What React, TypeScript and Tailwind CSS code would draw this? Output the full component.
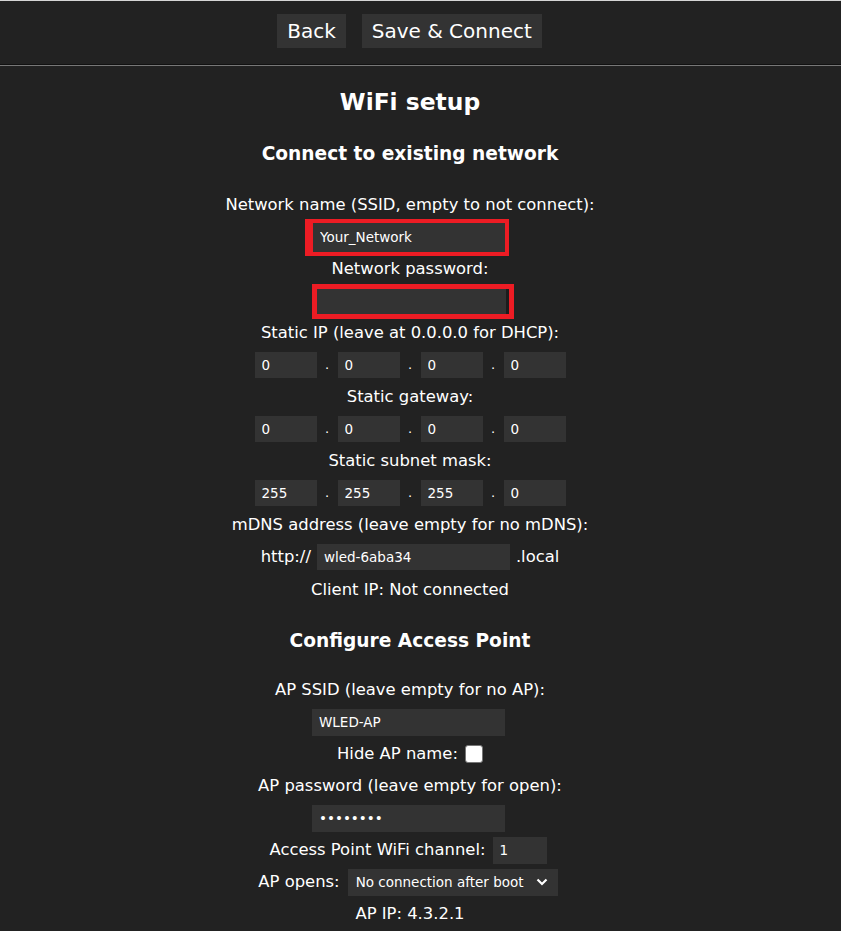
import React from 'react';

const inputCls =
  'bg-[#333] text-white text-[13.5px] px-[7px] outline-none border-0 font-["DejaVu_Sans",sans-serif]';

const Row: React.FC<{ children: React.ReactNode }> = ({ children }) => (
  <div className="h-8 flex items-center justify-center whitespace-nowrap">{children}</div>
);

const IpRow: React.FC<{ values: string[] }> = ({ values }) => (
  <Row>
    {values.map((v, i) => (
      <React.Fragment key={i}>
        {i > 0 && <span className="w-[21px] text-center text-[13px]">.</span>}
        <input readOnly value={v} className={`${inputCls} w-[62px] h-[26px]`} />
      </React.Fragment>
    ))}
  </Row>
);

export default function App() {
  return (
    <div className="min-h-[931px] bg-[#222] text-white font-['DejaVu_Sans',sans-serif] text-[16.4px] overflow-hidden">
      <div className="h-px bg-[#d6d6d6]" />
      <div className="h-[63px] pt-[13px] flex justify-center gap-4 pr-[22px]">
        <button className="h-[34px] px-[10px] bg-[#333] text-[20px] text-white">Back</button>
        <button className="h-[34px] px-[10px] bg-[#333] text-[20px] text-white">Save &amp; Connect</button>
      </div>
      <div className="h-px bg-[#111]" />
      <div className="h-px bg-[#777]" />

      <div className="pr-[21px] text-center">
        <h2 className="mt-[18px] h-9 leading-9 text-[23.4px] font-bold">WiFi setup</h2>
        <h3 className="mt-[18px] h-8 leading-8 text-[18.6px] font-bold">Connect to existing network</h3>

        <div className="mt-[19px]">
          <Row>Network name (SSID, empty to not connect):</Row>
          <Row>
            <div className="mr-[6px] w-[204px] h-[37px] border-[#ed1c24] border-y-4 border-l-8 border-r-4 flex">
              <input readOnly value="Your_Network" className={`${inputCls} w-full h-full`} />
            </div>
          </Row>
          <Row>Network password:</Row>
          <Row>
            <div className="ml-[6px] w-[202px] h-[35px] border-[5px] border-[#ed1c24] bg-[#1c1c1c] pr-[3px] flex">
              <input readOnly type="password" value="" className={`${inputCls} w-full h-full`} />
            </div>
          </Row>
          <Row>Static IP (leave at 0.0.0.0 for DHCP):</Row>
          <IpRow values={['0', '0', '0', '0']} />
          <Row>Static gateway:</Row>
          <IpRow values={['0', '0', '0', '0']} />
          <Row>Static subnet mask:</Row>
          <IpRow values={['255', '255', '255', '0']} />
          <Row>mDNS address (leave empty for no mDNS):</Row>
          <Row>
            <span className="mr-[6px]">http://</span>
            <input readOnly value="wled-6aba34" className={`${inputCls} w-[193px] h-[26px]`} />
            <span className="ml-[6px]">.local</span>
          </Row>
          <div className="pt-[1px]">
            <Row>Client IP: Not connected</Row>
          </div>
        </div>

        <h3 className="mt-[19px] h-8 leading-8 text-[18.6px] font-bold">Configure Access Point</h3>

        <div className="mt-[17px]">
          <Row>AP SSID (leave empty for no AP):</Row>
          <Row>
            <input readOnly value="WLED-AP" className={`${inputCls} w-[193px] h-[27px] mr-[3px]`} />
          </Row>
          <Row>
            <span>Hide AP name:</span>
            <span className="ml-[7px] w-[18px] h-[18px] bg-white rounded-[3px] border border-[#767676]" />
          </Row>
          <Row>AP password (leave empty for open):</Row>
          <Row>
            <input readOnly type="password" value="password" className={`${inputCls} w-[193px] h-[27px] mr-[3px]`} />
          </Row>
          <Row>
            <span>Access Point WiFi channel:</span>
            <input readOnly value="1" className={`${inputCls} w-[54px] h-[27px] ml-[7px] mr-[4px]`} />
          </Row>
          <Row>
            <span>AP opens:</span>
            <div className="ml-[8px] mr-[4px] w-[210px] h-[27px] bg-[#333] flex items-center justify-between pl-[8px] pr-[10px] text-[13.5px]">
              <span>No connection after boot</span>
              <svg width="12" height="8" viewBox="0 0 12 8" fill="none" stroke="white" strokeWidth="2.2">
                <path d="M1.5 1.5 L6 6 L10.5 1.5" />
              </svg>
            </div>
          </Row>
          <Row>AP IP: 4.3.2.1</Row>
        </div>
      </div>
    </div>
  );
}
